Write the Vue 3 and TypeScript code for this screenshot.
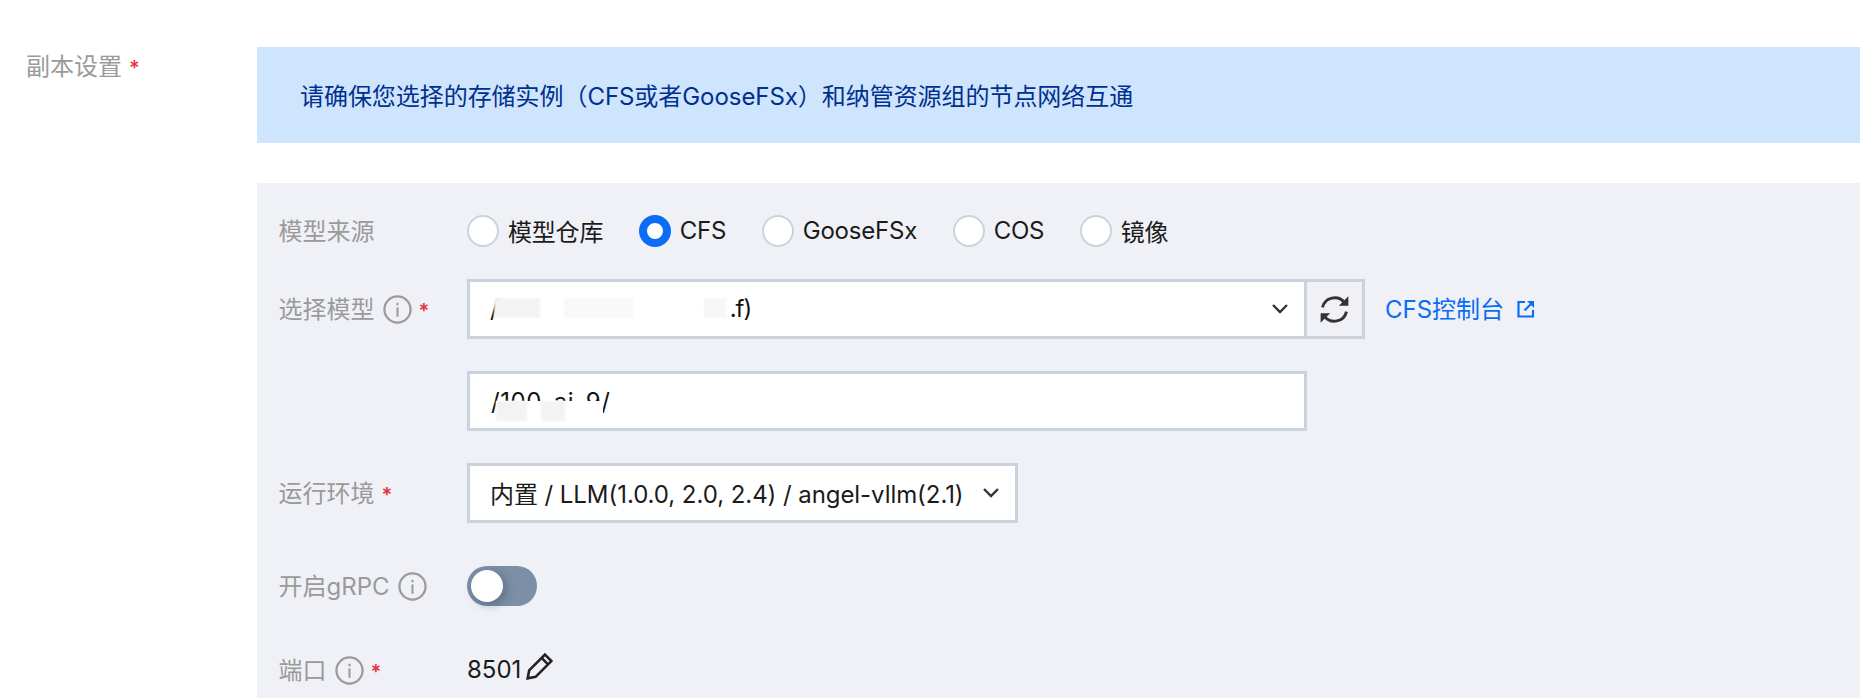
<script setup lang="ts">
const sources = [
  { name: '模型仓库', on: false },
  { name: 'CFS', on: true },
  { name: 'GooseFSx', on: false },
  { name: 'COS', on: false },
  { name: '镜像', on: false },
]
</script>

<template>
  <div class="page">
    <div class="side-label"><span>副本设置</span><i class="star">*</i></div>
    <div class="main">
      <div class="alert"><span>请确保您选择的存储实例（CFS或者GooseFSx）和纳管资源组的节点网络互通</span></div>
      <div class="panel">
        <div class="row r1">
          <div class="label"><span>模型来源</span></div>
          <div class="radios">
            <label v-for="s in sources" :key="s.name" class="radio">
              <span class="dot" :class="{ on: s.on }"></span>
              <span class="radio-text">{{ s.name }}</span>
            </label>
          </div>
        </div>

        <div class="row r2">
          <div class="label">
            <span>选择模型</span>
            <svg class="info" viewBox="0 0 28 28"><circle cx="14" cy="14" r="12.6" fill="none" stroke="#9b9b9b" stroke-width="2.2"/><rect x="13" y="12" width="2" height="9" fill="#9b9b9b"/><rect x="13" y="7.5" width="2" height="2.4" fill="#9b9b9b"/></svg>
            <i class="star">*</i>
          </div>
          <div class="field wide">
            <span class="masked first">
              <span class="frag">/</span>
              <span class="blot b1"></span><span class="blot b2"></span><span class="blot b3"></span>
              <span class="frag end">.f)</span>
            </span>
            <svg class="chev" viewBox="0 0 18 12"><path d="M2 2l7 7 7-7" fill="none" stroke="#333" stroke-width="2.4"/></svg>
          </div>
          <button class="refresh" type="button" aria-label="刷新">
            <svg viewBox="0 0 28 28" width="29" height="29">
              <path d="M2.4 12A12 12 0 0 1 23.6 7.4M25.6 16A12 12 0 0 1 4.4 20.6" fill="none" stroke="#333" stroke-width="2.8"/>
              <path d="M27.4 1.2v9.2h-9.2zM.6 26.8v-9.2h9.2z" fill="#333"/>
            </svg>
          </button>
          <a class="link">CFS控制台</a>
          <svg class="ext" viewBox="0 0 18 18"><path d="M8 2H1.5v14.5H16V10" fill="none" stroke="#0b6cf5" stroke-width="2.2"/><path d="M7.5 10.5L15 3" fill="none" stroke="#0b6cf5" stroke-width="2.2"/><path d="M10 1h7v7z" fill="#0b6cf5"/></svg>
        </div>

        <div class="row r3">
          <div class="label"></div>
          <div class="field wide plain">
            <span class="masked second">
              <span class="frag">/100-ai-9/</span>
              <span class="cover"><span class="blot b4"></span><span class="blot b5"></span></span>
            </span>
          </div>
        </div>

        <div class="row r4">
          <div class="label"><span>运行环境</span><i class="star">*</i></div>
          <div class="field env">
            <span class="env-text">内置 / LLM(1.0.0, 2.0, 2.4) / angel-vllm(2.1)</span>
            <svg class="chev" viewBox="0 0 18 12"><path d="M2 2l7 7 7-7" fill="none" stroke="#333" stroke-width="2.4"/></svg>
          </div>
        </div>

        <div class="row r5">
          <div class="label">
            <span>开启gRPC</span>
            <svg class="info" viewBox="0 0 28 28"><circle cx="14" cy="14" r="12.6" fill="none" stroke="#9b9b9b" stroke-width="2.2"/><rect x="13" y="12" width="2" height="9" fill="#9b9b9b"/><rect x="13" y="7.5" width="2" height="2.4" fill="#9b9b9b"/></svg>
          </div>
          <div class="toggle"><span class="knob"></span></div>
        </div>

        <div class="row r6">
          <div class="label">
            <span>端口</span>
            <svg class="info" viewBox="0 0 28 28"><circle cx="14" cy="14" r="12.6" fill="none" stroke="#9b9b9b" stroke-width="2.2"/><rect x="13" y="12" width="2" height="9" fill="#9b9b9b"/><rect x="13" y="7.5" width="2" height="2.4" fill="#9b9b9b"/></svg>
            <i class="star">*</i>
          </div>
          <span class="port">8501</span>
          <svg class="pencil" viewBox="0 0 28 28"><path d="M2.5 25.5l1.4-7.4L18.6 3.4l6 6L9.9 24.1z" fill="none" stroke="#222" stroke-width="2.4"/><path d="M15.5 6.5l6 6" stroke="#222" stroke-width="2.4"/></svg>
        </div>
      </div>
    </div>
  </div>
</template>

<style>
html, body { background: #fff; overflow: hidden; }
</style>

<style scoped>
.page {
  display: flex;
  height: 698px;
  overflow: hidden;
  padding-top: 47px;
  box-sizing: border-box;
  font-family: Inter, "Noto Sans CJK SC", sans-serif;
  font-size: 24px;
  color: #1b1b1b;
}
.side-label {
  width: 231px;
  margin-left: 26px;
  display: flex;
  align-items: center;
  height: 38px;
  color: #9a9a9a;
  white-space: nowrap;
}
.side-label > span { margin-bottom: 4px; }
.star {
  color: #e5343d;
  font-style: normal;
  font-weight: 600;
  font-size: 20px;
  margin-left: 7px;
  line-height: 1;
  position: relative;
  top: 2px;
}
.main { flex: 1; min-width: 0; }
.alert {
  height: 96px;
  background: #cfe4fd;
  color: #00308f;
  display: flex;
  align-items: center;
  padding-left: 43px;
  white-space: nowrap;
  letter-spacing: -0.05px;
}
.alert > span { margin-bottom: 2px; }
.panel {
  margin-top: 40px;
  background: #eff1f6;
  padding: 32px 0 60px 21.5px;
  height: 600px;
  box-sizing: border-box;
}
.row { display: flex; align-items: center; }
.r1 { height: 32px; }
.r2 { height: 60px; margin-top: 32px; }
.r3 { height: 60px; margin-top: 32px; }
.r4 { height: 60px; margin-top: 32px; }
.r5 { height: 40px; margin-top: 43px; }
.r6 { height: 32px; margin-top: 48px; }
.label {
  width: 188.5px;
  flex: none;
  display: flex;
  align-items: center;
  color: #9a9a9a;
  white-space: nowrap;
}
.label > span { margin-bottom: 4px; }
.info { width: 29px; height: 29px; margin-left: 8px; flex: none; }
.radios { display: flex; gap: 35.5px; }
.radio { display: flex; align-items: center; gap: 9px; }
.radio-text { margin-bottom: 2px; letter-spacing: -0.2px; }
.dot {
  width: 32px;
  height: 32px;
  box-sizing: border-box;
  border-radius: 50%;
  border: 2.5px solid #c9d2dd;
  background: #fff;
}
.dot.on { border: 8px solid #0b6cf5; }
.field {
  height: 60px;
  box-sizing: border-box;
  background: #fff;
  border: 3px solid #c9d2dd;
  display: flex;
  align-items: center;
  justify-content: space-between;
  white-space: nowrap;
}
.wide { width: 840px; padding: 0 15px 0 20px; }
.env { width: 551px; padding: 0 15px 0 20px; }
.env-text { margin-bottom: 2px; letter-spacing: -0.06px; }
.chev { width: 18px; height: 12px; flex: none; }
.masked { display: flex; align-items: center; position: relative; }
.first { margin-bottom: 2px; }
.frag { color: #111; }
.end { margin-left: 4px; letter-spacing: -1px; }
.blot { height: 20px; background: #f7f7f7; display: block; filter: blur(1px); position: relative; }
.b1 { width: 46px; margin-left: -5px; background: #f3f3f3; }
.b2 { width: 70px; margin-left: 24px; background: #f9f9f9; }
.b3 { width: 22px; margin-left: 70px; background: #f7f7f7; }
.second { margin-left: 1px; letter-spacing: 0.6px; }
.cover {
  position: absolute;
  left: 5px;
  right: 8px;
  top: 14px;
  bottom: 0;
  background: #fff;
  display: flex;
  align-items: flex-start;
}
.b4 { width: 31px; background: #f3f3f3; }
.b5 { width: 24px; margin-left: 14px; background: #f3f3f3; }
.refresh {
  width: 61px;
  height: 60px;
  margin-left: -3px;
  box-sizing: border-box;
  border: 3px solid #c9d2dd;
  background: #eff1f6;
  padding: 0;
  display: flex;
  align-items: center;
  justify-content: center;
}
.link { margin-left: 20px; color: #0b6cf5; margin-bottom: 3px; }
.ext { width: 18px; height: 18px; margin-left: 13px; }
.toggle {
  width: 70px;
  height: 40px;
  border-radius: 20px;
  background: #7b8fa7;
  padding: 4px;
  box-sizing: border-box;
}
.knob {
  display: block;
  width: 32px;
  height: 32px;
  border-radius: 50%;
  background: #fff;
  box-shadow: 3px 3px 10px rgba(40, 50, 70, 0.35);
}
.port { color: #1b1b1b; margin-bottom: 2px; }
.pencil { width: 30px; height: 30px; margin-left: 4px; margin-top: -8px; }
</style>
